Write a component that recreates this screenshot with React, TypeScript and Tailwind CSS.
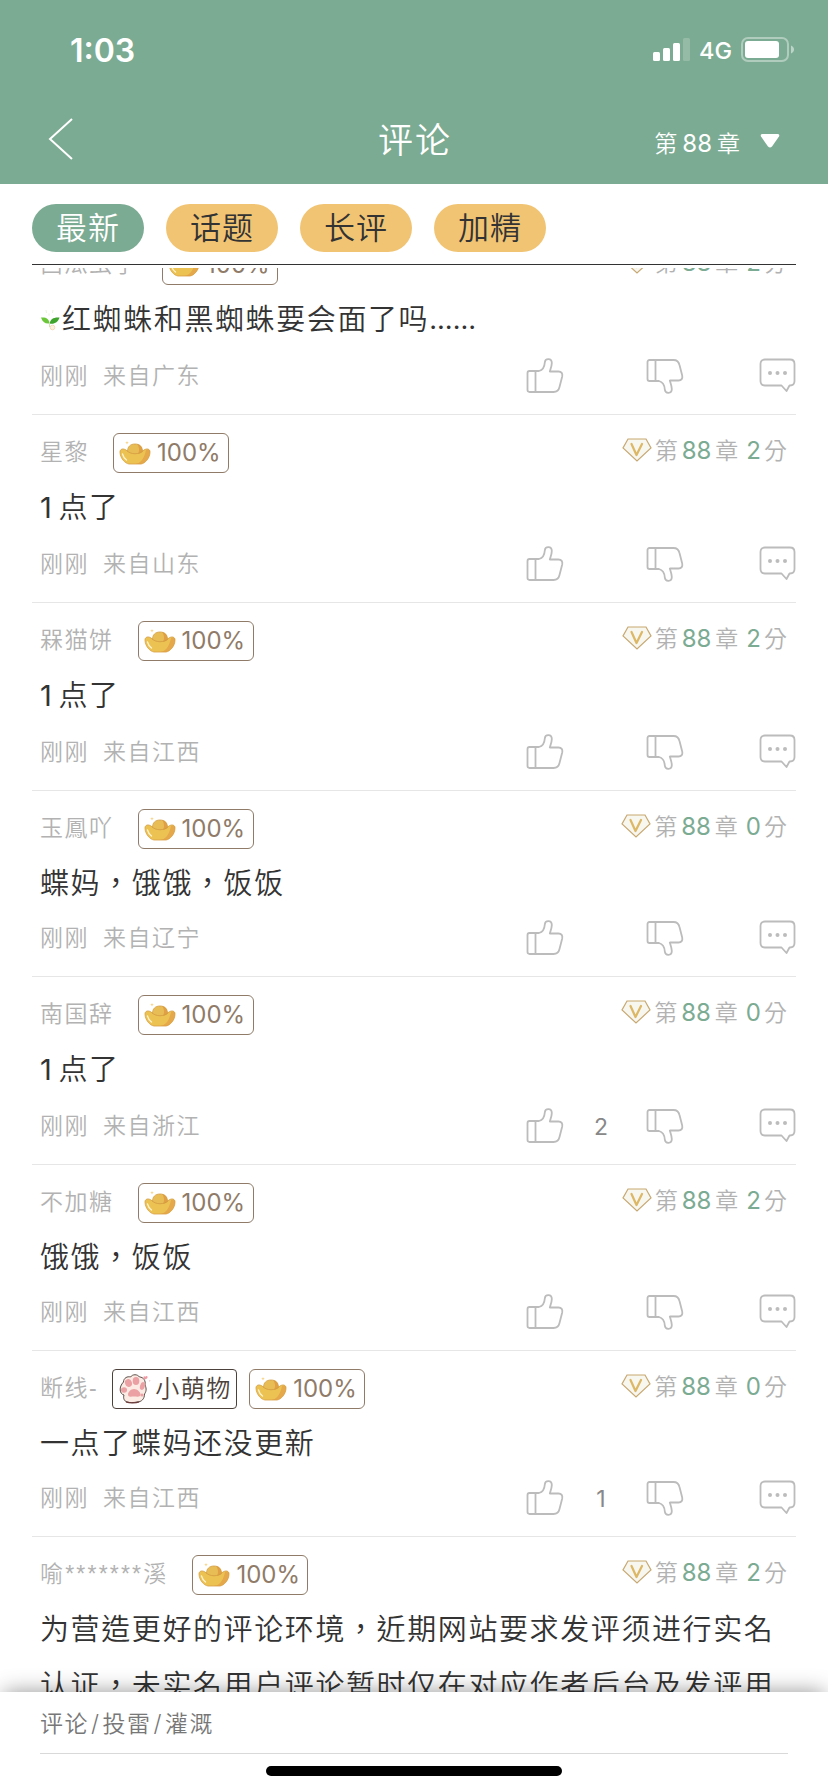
import { useState } from 'react';

const tabs = ['最新', '话题', '长评', '加精'];

const comments = [
  { name: '西瓜虫子', text: '红蜘蛛和黑蜘蛛要会面了吗', tail: '……', from: '广东', score: 2, likes: 0, height: 'h-[188px]', sprout: true },
  { name: '星黎', lead: '1', text: '点了', from: '山东', score: 2, likes: 0, height: 'h-[188px]' },
  { name: '槑猫饼', lead: '1', text: '点了', from: '江西', score: 2, likes: 0, height: 'h-[188px]' },
  { name: '玉鳳吖', text: '蝶妈，饿饿，饭饭', from: '辽宁', score: 0, likes: 0, height: 'h-[186px]' },
  { name: '南国辞', lead: '1', text: '点了', from: '浙江', score: 0, likes: 2, height: 'h-[188px]' },
  { name: '不加糖', text: '饿饿，饭饭', from: '江西', score: 2, likes: 0, height: 'h-[186px]' },
  { name: '断线-', text: '一点了蝶妈还没更新', from: '江西', score: 0, likes: 1, height: 'h-[186px]', pet: true },
  {
    name: '喻*******溪',
    masked: true,
    text: '为营造更好的评论环境，近期网站要求发评须进行实名认证，未实名用户评论暂时仅在对应作者后台及发评用',
    from: '',
    score: 2,
    likes: 0,
    height: 'h-[300px]',
    last: true,
  },
];

function StatusBar() {
  return (
    <div className="flex h-[98px] items-center justify-between pl-[70px] pr-[33px] pt-[2px] text-white">
      <span className="pt-0.5 text-[32px] font-semibold leading-none">1:03</span>
      <div className="flex items-center gap-[9px]">
        <svg width="38" height="24" viewBox="0 0 38 24" fill="currentColor">
          <rect x="0" y="14" width="7" height="9" rx="1.5" />
          <rect x="10" y="10" width="7" height="13" rx="1.5" />
          <rect x="20" y="5" width="7" height="18" rx="1.5" />
          <rect x="30" y="0" width="7" height="23" rx="1.5" opacity="0.2" />
        </svg>
        <span className="-ml-px mr-px w-8 pt-0.5 text-[23.5px] font-medium leading-none">4G</span>
        <svg width="54" height="26" viewBox="0 0 54 26">
          <rect x="1" y="1" width="46" height="23" rx="6" fill="none" stroke="#fff" strokeOpacity="0.4" strokeWidth="2" />
          <rect x="4" y="4" width="34" height="17" rx="3" fill="#fff" />
          <path d="M50 8.500c4 1.500 4 6.500 0 8z" fill="#fff" fillOpacity="0.5" />
        </svg>
      </div>
    </div>
  );
}

function Ingot() {
  return (
    <svg width="32" height="24" viewBox="0 0 32 24">
      <path d="M1 11c0-3 3-4 6-2 4 4 14 4 18 0 3-2 6-1 6 2 0 6-5 11.500-9 12H10C6 22.500 1 17 1 11z" fill="#ecc353" />
      <path d="M31 11c0 6-5 11.500-9 12h-6c6-1 9-5 11-14 2-1 4-1 4 2z" fill="#e5a84a" />
      <path d="M8.500 11C8.500 6 11 3 16 3s7.500 3 7.500 8c-4 3-11 3-15 0z" fill="#e9bd55" />
      <path d="M18 3.200c4 .6 5.500 3.500 5.500 7.800-1.500 1.200-3 1.700-4.500 2 1.500-3 1.500-7-1-9.800z" fill="#e0a043" />
      <path d="M1 11c0-3 3-4 6-2 5 5 13 5 18 0 3-2 6-1 6 2" fill="none" stroke="#d39c40" strokeWidth="0.8" />
      <path d="M8.500 10.500C8.500 6 11 3 16 3s7.500 3 7.500 7.500" fill="none" stroke="#d39c40" strokeWidth="0.8" />
      <path d="M1 11c0 6 5 11.500 9 12h12c4-.5 9-6 9-12" fill="none" stroke="#dba044" strokeWidth="0.8" />
      <path d="M3.500 13c.6 2.500 2 4.500 4 6" fill="none" stroke="#fdf3cf" strokeWidth="1.300" strokeLinecap="round" />
      <path d="M8 0l.5 1.300 1.300.5-1.300.5L8 3.600l-.5-1.300-1.300-.5 1.300-.5z" fill="#f6cf7c" />
    </svg>
  );
}

function Paw() {
  return (
    <svg width="33" height="32" viewBox="0 0 33 32">
      <path
        d="M5.500 9c0-4 4-6 7-5 2-3 7-3 9 0 4 0 6.500 4 5.500 8 2 4 1 7-.5 9 0 5-3 8-7.500 8-4 .8-7 .8-10 0-3-1-4-4-3-7-4.500-1-5.500-8-.5-13z"
        fill="#fbebe4"
        stroke="#5a4f48"
        strokeWidth="1"
      />
      <path d="M8 28.800c4 1.500 10 1.300 13 0" fill="none" stroke="#6d3b3b" strokeWidth="1.400" />
      <ellipse cx="10.500" cy="10" rx="3.400" ry="4" fill="#eba0a3" transform="rotate(-20 10.500 10)" />
      <ellipse cx="18" cy="8" rx="3.300" ry="4" fill="#eba0a3" />
      <ellipse cx="24.500" cy="13" rx="2.400" ry="4" fill="#eba0a3" transform="rotate(18 24.500 13)" />
      <ellipse cx="6" cy="17" rx="3" ry="2.800" fill="#eba0a3" />
      <path d="M16 16c3 0 6.500 3 6.500 5.500 0 3-3.500 2-6.500 2s-6 1-6-2c0-2.500 3-5.500 6-5.500z" fill="#eba0a3" />
      <circle cx="24" cy="22" r="1.600" fill="#eba0a3" />
      <path d="M27 6.500c-3-2-1-4.500.3-2.700 1-2 3.500-.3 1.700 1.700zM31.500 7l1 .8-1.200.9z" fill="#ef9aa5" />
    </svg>
  );
}

function Sprout() {
  return (
    <svg width="22" height="22" viewBox="0 0 22 22">
      <path d="M9.500 14.500C5 15 2.500 13 1 8.500c5-.5 8 1 8.500 6z" fill="#6cc63a" />
      <path d="M9.500 14.500c1-4.500 4-6.500 10-6C18 13.500 14 15.500 9.500 14.500z" fill="#3fa52c" />
      <path d="M9.500 13.500v4.500" stroke="#cfe3b8" strokeWidth="1" />
      <circle cx="12.500" cy="18.500" r="2.300" fill="#fdf1de" stroke="#f1d3ab" strokeWidth="0.800" />
      <path d="M6 1l.5 3M13 1l-.6 3M9 4.500v2" stroke="#e3f1d2" strokeWidth="0.900" />
    </svg>
  );
}

function Diamond() {
  return (
    <svg width="30" height="24" viewBox="0 0 30 24" fill="none">
      <path d="M6 1h18l5 9-14 13L1 10z" fill="#f7f6ef" stroke="#c7a871" strokeWidth="1.200" />
      <path d="M9.500 6l5 11L20 6" stroke="#dcb765" strokeWidth="2.200" strokeLinecap="round" strokeLinejoin="round" />
    </svg>
  );
}

function ThumbUp({ className = '' }) {
  return (
    <svg className={className} width="38" height="36" viewBox="0 0 38 36" fill="none" stroke="#bcbcbc" strokeWidth="1.800" strokeLinejoin="round">
      <path d="M3.500 13H13c4-1 5.500-4 5.800-8.500.4-4.500 7-4.500 7 .5 0 3-1.300 6-2 8.500h8.700c3 0 4.300 2 3.700 5l-2.700 10.500c-.8 3.500-2.500 5-6 5h-24c-1.300 0-2-.7-2-2v-17c0-1.300.7-2 2-2z" />
      <path d="M9.500 13v21" />
    </svg>
  );
}

function Bubble() {
  return (
    <svg width="38" height="36" viewBox="0 0 38 36" fill="none" stroke="#bcbcbc" strokeWidth="1.800" strokeLinejoin="round">
      <path d="M7 1.500h25c3 0 4.500 1.500 4.500 4.500v17c0 3-1.500 4.500-4.500 4.500h-.5L28.500 33l-5-5.500H7c-3 0-4.500-1.500-4.500-4.500V6c0-3 1.500-4.500 4.500-4.500z" />
      <g fill="#bcbcbc" stroke="none">
        <circle cx="12" cy="15" r="2" />
        <circle cx="19.500" cy="15" r="2" />
        <circle cx="27" cy="15" r="2" />
      </g>
    </svg>
  );
}

function Comment({ item }) {
  return (
    <li className={`flex shrink-0 flex-col justify-between border-b border-[#e6e6e6] ${item.height}`}>
      <div>
        <div className="mt-[18px] flex h-10 items-start pl-2 pr-[9px]">
          <span
            className={`mt-[3px] h-8 whitespace-nowrap font-['Liberation_Sans','Noto_Sans_CJK_TC',sans-serif] text-[23px] leading-8 text-[#b2b2b2] ${
              item.masked ? 'tracking-[2.2px]' : 'tracking-[1.5px]'
            }`}
          >
            {item.name}
          </span>
          {item.pet && (
            <span className="ml-3.5 flex h-10 w-[125px] items-center gap-1 rounded-[4px] border border-[#4c423b] pl-[5px] text-[24px] leading-none tracking-[1.5px] text-[#4c423b]">
              <Paw />
              <span className="whitespace-nowrap">小萌物</span>
            </span>
          )}
          <span
            className={`flex h-10 w-[116px] items-center rounded-[6px] border border-[#8f7b68] pl-[5px] text-[#8f7b68] ${
              item.pet ? 'ml-3' : 'ml-6'
            }`}
          >
            <Ingot />
            <span className="ml-1.5 text-[24px] font-normal leading-none">100%</span>
          </span>
          <div className="ml-auto flex h-9 items-center whitespace-nowrap text-[23px] leading-8 text-[#b2b2b2]">
            <span className="-mt-0.5">
              <Diamond />
            </span>
            <span className="ml-[3px]">第</span>
            <span className="mx-1 text-[24px] font-normal text-[#7bab92]">88</span>
            <span>章</span>
            <span className="ml-2 mr-[3px] text-[24px] font-normal text-[#7bab92]">{item.score}</span>
            <span>分</span>
          </div>
        </div>
        <p className="mt-[7px] flex h-[56px] pl-2 text-[29px] leading-[56px] tracking-[1.6px] text-[#333]">
          {item.sprout && (
            <span className="flex items-center">
              <Sprout />
            </span>
          )}
          {item.lead && <span className="mr-[5px] font-normal">{item.lead}</span>}
          <span>{item.text}</span>
          {item.tail && <span className="text-[27px] font-normal tracking-[0.3px]">{item.tail}</span>}
        </p>
      </div>
      {!item.last && (
        <div className="mb-5 flex h-9 items-center pl-2">
          <span className="w-[486px] whitespace-pre text-[23px] leading-9 tracking-[1.5px] [word-spacing:-1px] text-[#b2b2b2]">
            刚刚  来自{item.from}
          </span>
          <ThumbUp />
          <span className="flex w-[82px] justify-center pr-2 pt-0.5 text-[23px] font-normal text-[#888]">{item.likes || ''}</span>
          <ThumbUp className="-scale-y-100" />
          <span className="ml-auto">
            <Bubble />
          </span>
        </div>
      )}
    </li>
  );
}

export default function App() {
  const [active, setActive] = useState('最新');

  return (
    <div className="flex h-[1792px] w-[828px] flex-col overflow-hidden bg-white font-['Inter','Noto_Sans_CJK_TC',sans-serif] font-[350]">
      <header className="h-[184px] shrink-0 bg-[#7bab92] text-white">
        <StatusBar />
        <div className="grid h-[82px] grid-cols-3 items-center px-12">
          <svg width="26" height="42" viewBox="0 0 26 42" fill="none" stroke="#fff" strokeWidth="2">
            <path d="M24 1L2 21l22 20" />
          </svg>
          <h1 className="pl-0.5 pt-0.5 text-center text-[35px] leading-none tracking-[2px]">评论</h1>
          <button className="flex items-center justify-end pt-2.5 text-[23px] leading-none">
            <span>第</span>
            <span className="mx-[5px] text-[24px] font-normal">88</span>
            <span>章</span>
            <svg className="-mt-1.5 ml-5" width="20" height="16" viewBox="0 0 20 16" fill="#fff">
              <path d="M2 1h16q2 .5 1 2.500l-7 10q-2 2-4 0L1 3.500Q0 1.500 2 1z" />
            </svg>
          </button>
        </div>
      </header>

      <nav className="mx-8 flex h-[81px] shrink-0 gap-[22px] border-b border-[#333] pt-5">
        {tabs.map((tab) => (
          <button
            key={tab}
            onClick={() => setActive(tab)}
            className={`h-12 w-28 rounded-full text-[31px] leading-[46px] tracking-[1px] ${
              active === tab ? 'bg-[#7bab92] text-white' : 'bg-[#f1c473] text-[#333]'
            }`}
          >
            {tab}
          </button>
        ))}
      </nav>

      <main className="mx-8 mt-[3px] flex min-h-0 flex-1 flex-col justify-start overflow-hidden">
        <ul className="-mt-[41px] flex flex-col">
          {comments.map((item) => (
            <Comment key={item.name} item={item} />
          ))}
        </ul>
      </main>

      <footer className="relative h-[100px] shrink-0 bg-white px-10 shadow-[0_-4px_20px_-4px_rgba(0,0,0,0.42)]">
        <div className="h-[62px] border-b border-[#d9d9d9] text-[23px] leading-[64px] tracking-[1.5px] text-[#777]">
          评论<span className="mx-0.5">/</span>投雷<span className="mx-0.5">/</span>灌溉
        </div>
        <div className="mx-auto mt-3 h-2.5 w-[296px] rounded-full bg-black" />
      </footer>
    </div>
  );
}
